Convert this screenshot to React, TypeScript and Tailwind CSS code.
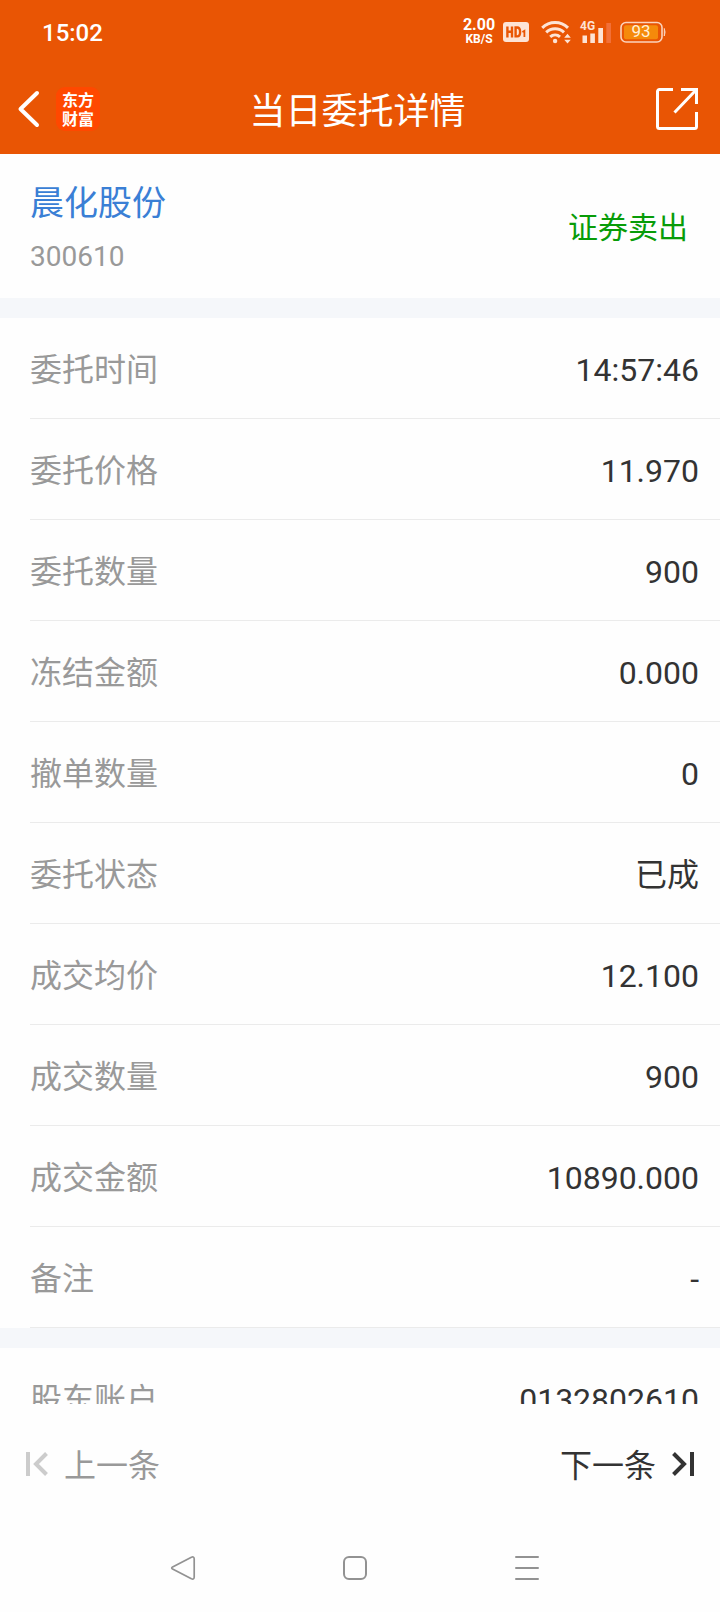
import React from "react";

type Entry = { label: string; value: string };

const orderEntries: Entry[] = [
  { label: "委托时间", value: "14:57:46" },
  { label: "委托价格", value: "11.970" },
  { label: "委托数量", value: "900" },
  { label: "冻结金额", value: "0.000" },
  { label: "撤单数量", value: "0" },
  { label: "委托状态", value: "已成" },
  { label: "成交均价", value: "12.100" },
  { label: "成交数量", value: "900" },
  { label: "成交金额", value: "10890.000" },
  { label: "备注", value: "-" },
];

const accountEntries: Entry[] = [{ label: "股东账户", value: "0132802610" }];

function StatusBar() {
  return (
    <div className="flex h-16 items-center justify-between pr-[54px] pl-[42px]">
      <span className="pt-0.5 text-2xl font-medium">15:02</span>
      <div className="flex items-center">
        <p className="w-9 text-center text-base leading-[13px] font-bold">
          2.00
          <br />
          <span className="text-xs">KB/S</span>
        </p>
        <svg className="ml-1.5" width="26" height="20" viewBox="0 0 26 20" aria-hidden="true">
          <rect width="26" height="20" rx="3" fill="#fde3d5" />
          <g fill="none" stroke="#e95504" strokeWidth="2.4">
            <path d="M4.4 4.5v11M9 4.5v11M4.4 9.8H9M12.6 5.5h1.600c2 0 2.900 1.400 2.900 4.500s-.9 4.400-2.900 4.400h-1.600z" />
            <path d="M19.400 10l2-1.200V15" strokeWidth="1.8" />
          </g>
        </svg>
        <svg className="ml-3" width="31" height="24" viewBox="0 0 31 24" aria-hidden="true">
          <g fill="none" stroke="#fde3d5" strokeWidth="3">
            <path d="M1.200 7.800a18.500 18.500 0 0 1 25.800 0" />
            <path d="M5.200 12.400a12.800 12.800 0 0 1 17.800 0" />
            <path d="M9.200 16.800a7.400 7.400 0 0 1 9.800 0" />
          </g>
          <circle cx="14.1" cy="21" r="2.2" fill="#fde3d5" />
          <path d="M23.200 17.800l3.300-4 3.300 4zM23.200 19.800h6.600l-3.300 3.700z" fill="#fde3d5" />
        </svg>
        <div className="relative ml-2 h-6 w-8">
          <span className="absolute top-0 left-0 text-xs leading-3 font-bold text-[#fde3d5]">4G</span>
          <svg className="h-6 w-8" viewBox="0 0 32 24" aria-hidden="true">
            <path d="M2.500 15.500H7V23H2.500zM10.300 13.500h4.600V23h-4.600zM18.300 8H23v15h-4.700z" fill="#fde3d5" />
            <path d="M26.300 3H31v20h-4.700z" fill="#f27038" />
          </svg>
        </div>
        <div className="relative ml-2 h-6 w-[46px]">
          <svg className="h-6 w-[46px]" viewBox="0 0 46 24" aria-hidden="true">
            <rect x="1" y="2.5" width="41" height="19.5" rx="5" fill="none" stroke="#fbd3bd" strokeWidth="1.6" />
            <rect x="4" y="5.2" width="34" height="14" rx="2" fill="#f58a0b" />
            <path d="M44.300 8.500q1.500 3.500 0 7.500z" fill="#fbd3bd" stroke="#fbd3bd" />
          </svg>
          <span className="absolute inset-y-0 left-0 flex w-[42px] items-center justify-center text-[17px] text-[#fff0d8]">
            93
          </span>
        </div>
      </div>
    </div>
  );
}

function TitleBar() {
  return (
    <div className="grid h-[90px] grid-cols-[1fr_auto_1fr] items-center pr-[21px] pl-4">
      <div className="flex items-center gap-4">
        <button type="button" aria-label="返回">
          <svg width="24" height="40" viewBox="0 0 24 40" fill="none" stroke="#fff" strokeWidth="4" strokeLinecap="round" strokeLinejoin="round">
            <path d="M21 4L4.500 20 21 36" />
          </svg>
        </button>
        <div className="flex h-11 w-11 items-center justify-center rounded-[9px] bg-[#ff4800]">
          <p className="w-8 font-['Noto_Sans_CJK_SC',sans-serif] text-base leading-[19px] font-bold break-all">
            东方财富
          </p>
        </div>
      </div>
      <h1 className="pt-1.5 text-4xl font-normal">当日委托详情</h1>
      <button type="button" aria-label="分享" className="justify-self-end">
        <svg width="44" height="44" viewBox="0 0 44 44" fill="none" stroke="#fff" strokeWidth="3">
          <path d="M18 2.500H4.500a2 2 0 0 0-2 2v35a2 2 0 0 0 2 2h35a2 2 0 0 0 2-2V25" />
          <path d="M26 2.500h15.500V17M41 3L19.500 25.500" />
        </svg>
      </button>
    </div>
  );
}

function EntryList({ entries }: { entries: Entry[] }) {
  return (
    <dl>
      {entries.map((entry) => (
        <div key={entry.label} className="pl-[30px]">
          <div className="flex h-[101px] items-center justify-between border-b border-[#ebebeb] pt-[3px] pr-[21px] text-[32px]">
            <dt className="text-[#999999]">{entry.label}</dt>
            <dd className="text-[#333333]">{entry.value}</dd>
          </div>
        </div>
      ))}
    </dl>
  );
}

function SystemNav() {
  return (
    <nav className="flex h-[88px] items-center justify-center gap-[146px] pr-[10px]" aria-label="系统导航">
      <button type="button" aria-label="后退">
        <svg width="26" height="26" viewBox="0 0 26 26" fill="none" stroke="#929292" strokeWidth="1.7" strokeLinejoin="round">
          <path d="M2.600 11.900L21.400 2.200q2.800-1 2.800 1.800v18q0 2.800-2.800 1.800L2.600 14.100q-1.700-1.100 0-2.200z" />
        </svg>
      </button>
      <button type="button" aria-label="主屏幕">
        <svg width="26" height="26" viewBox="0 0 26 26" fill="none" stroke="#929292" strokeWidth="2">
          <rect x="2" y="2" width="22" height="22" rx="5" />
        </svg>
      </button>
      <button type="button" aria-label="最近任务">
        <svg width="26" height="26" viewBox="0 0 26 26" fill="none" stroke="#929292" strokeWidth="2" strokeLinecap="round">
          <path d="M2 2h22M2 13h22M2 24h22" />
        </svg>
      </button>
    </nav>
  );
}

export default function App() {
  return (
    <div className="flex h-screen flex-col bg-[#fefefe] font-['Roboto','Noto_Sans_CJK_SC',sans-serif]">
      <header className="shrink-0 bg-[#e95504] text-white">
        <StatusBar />
        <TitleBar />
      </header>

      <main className="min-h-0 flex-1 overflow-y-auto [scrollbar-width:none]">
        <section className="flex h-36 items-center justify-between pt-[3px] pr-8 pl-[30px]">
          <div className="flex flex-col gap-2.5">
            <a href="#stock" className="text-[34px] leading-[48px] text-[#3a7fd5]">
              晨化股份
            </a>
            <span className="text-[28px] leading-10 text-[#999999]">300610</span>
          </div>
          <span className="text-3xl text-[#089c08]">证券卖出</span>
        </section>
        <div className="h-5 bg-[#f5f7fa]" />
        <EntryList entries={orderEntries} />
        <div className="h-5 bg-[#f5f7fa]" />
        <EntryList entries={accountEntries} />
      </main>

      <footer className="shrink-0">
        <div className="flex h-[120px] items-center justify-between px-6 text-[32px]">
          <button type="button" className="flex items-center gap-4 text-[#999999]">
            <svg width="24" height="24" viewBox="0 0 24 24" fill="none" stroke="#cccccc" strokeWidth="4" aria-hidden="true">
              <path d="M4 0v24M22.500 1.500L12 12l10.500 10.500" />
            </svg>
            <span className="pt-[3px]">上一条</span>
          </button>
          <button type="button" className="flex items-center gap-4 text-[#333333]">
            <span className="pt-[3px]">下一条</span>
            <svg width="24" height="24" viewBox="0 0 24 24" fill="none" stroke="#333333" strokeWidth="4" aria-hidden="true">
              <path d="M20 0v24M1.500 1.500L12 12 1.500 22.500" />
            </svg>
          </button>
        </div>
        <SystemNav />
      </footer>
    </div>
  );
}
